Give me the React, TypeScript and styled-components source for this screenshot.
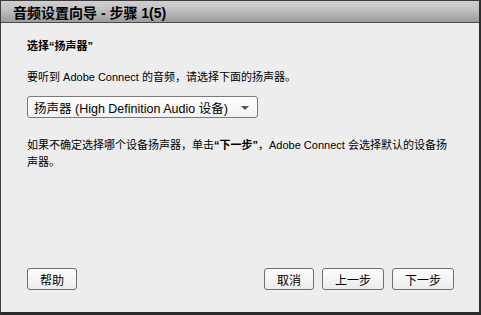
import React from 'react';
import styled, { createGlobalStyle } from 'styled-components';

const GlobalStyle = createGlobalStyle`
  html, body {
    margin: 0;
    padding: 0;
    background: #2b2b2b;
  }
  body {
    font-family: "Liberation Sans", Arial, "Noto Sans CJK SC", sans-serif;
    color: #000;
  }
`;

const Window = styled.div`
  width: 481px;
  height: 315px;
  box-sizing: border-box;
  border-top: 1px solid #3c3c3c;
  border-left: 1px solid #3c3c3c;
  border-right: 2px solid #2e2e2e;
  border-bottom: 3px solid #2a2a2a;
  display: flex;
  flex-direction: column;
  background: #ededed;
`;

const TitleBar = styled.div`
  height: 21px;
  display: flex;
  align-items: center;
  padding-left: 12px;
  background: linear-gradient(#d0d0d0, #c2c2c2 40%, #9c9c9c);
  border-bottom: 1px solid #4a4a4a;
  font-size: 14px;
  font-weight: bold;
  color: #000;
`;

const Body = styled.div`
  flex: 1;
  display: flex;
  flex-direction: column;
  padding: 15px 25px 22px 26px;
`;

const Heading = styled.div`
  font-size: 11px;
  font-weight: bold;
  line-height: 16px;
`;

const Text = styled.p<{ $gap: number }>`
  margin: ${(p) => p.$gap}px 0 0;
  font-size: 11px;
  line-height: 17px;
`;

const Select = styled.div`
  margin-top: 10px;
  width: 231px;
  height: 22px;
  box-sizing: border-box;
  display: flex;
  align-items: center;
  justify-content: space-between;
  padding: 0 8px 0 6px;
  border: 1px solid #7a7a7a;
  border-radius: 3px;
  background: linear-gradient(#ffffff, #f2f2f2);
  font-size: 12.5px;
`;

const Caret = styled.span`
  width: 0;
  height: 0;
  border-left: 4px solid transparent;
  border-right: 4px solid transparent;
  border-top: 4px solid #555;
  margin-top: 2px;
`;

const Footer = styled.div`
  margin-top: auto;
  display: flex;
  gap: 8px;
`;

const Spacer = styled.div`
  flex: 1;
`;

const Button = styled.button<{ $w: number }>`
  width: ${(p) => p.$w}px;
  height: 22px;
  padding: 0;
  border: 1px solid #6f6f6f;
  border-radius: 3px;
  background: linear-gradient(#fdfdfd, #ececec);
  font-family: "Liberation Sans", "Noto Sans CJK SC", sans-serif;
  font-size: 12px;
  color: #000;
`;

export default function App() {
  return (
    <>
      <GlobalStyle />
      <Window>
        <TitleBar>音频设置向导 - 步骤 1(5)</TitleBar>
        <Body>
          <Heading>选择“扬声器”</Heading>
          <Text $gap={15}>要听到 Adobe Connect 的音频，请选择下面的扬声器。</Text>
          <Select>
            <span>扬声器 (High Definition Audio 设备)</span>
            <Caret />
          </Select>
          <Text $gap={19}>
            如果不确定选择哪个设备扬声器，单击<b>“下一步”</b>，Adobe Connect 会选择默认的设备扬
            <br />
            声器。
          </Text>
          <Footer>
            <Button $w={50}>帮助</Button>
            <Spacer />
            <Button $w={50}>取消</Button>
            <Button $w={62}>上一步</Button>
            <Button $w={62}>下一步</Button>
          </Footer>
        </Body>
      </Window>
    </>
  );
}
